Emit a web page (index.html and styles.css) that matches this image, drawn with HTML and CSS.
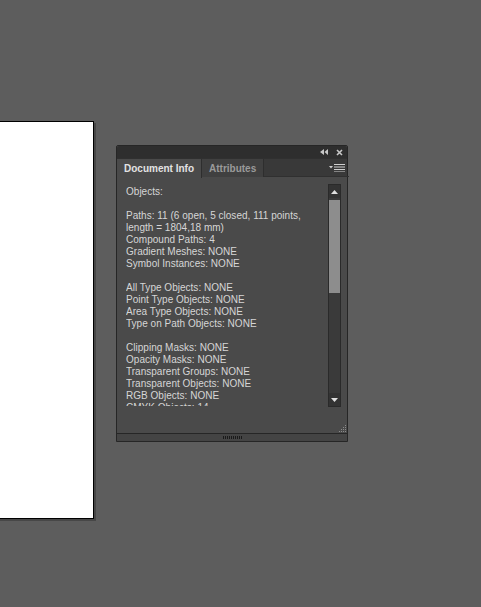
FILE: index.html
```
<!DOCTYPE html>
<html>
<head>
<meta charset="utf-8">
<link rel="stylesheet" href="styles.css">
</head>
<body>
<div class="canvas">
  <div class="artboard"></div>
  <div class="panel">
    <div class="titlebar">
      <svg class="ti" width="8" height="6" viewBox="0 0 8 6"><path d="M4 0 L0 3 L4 6 Z M8 0 L4.5 3 L8 6 Z" fill="#c8c8c8"/></svg>
      <svg class="ti" width="7" height="7" viewBox="0 0 7 7"><path d="M1 1 L6 6 M6 1 L1 6" stroke="#c8c8c8" stroke-width="1.6"/></svg>
    </div>
    <div class="tabs">
      <div class="tab active">Document Info</div>
      <div class="tab">Attributes</div>
      <div class="tabfill"></div>
      <svg class="menu" width="16" height="8" viewBox="0 0 16 8"><path d="M0 2 L4 2 L2 4.5 Z" fill="#d0d0d0"/><path d="M5 0.5 H16 M5 3 H16 M5 5.5 H16 M5 8 H16" stroke="#d0d0d0" stroke-width="1"/></svg>
    </div>
    <div class="body">
      <div class="content">
        <div class="line">Objects:</div>
        <div class="line blank"></div>
        <div class="line">Paths: 11 (6 open, 5 closed, 111 points,</div>
        <div class="line">length = 1804,18 mm)</div>
        <div class="line">Compound Paths: 4</div>
        <div class="line">Gradient Meshes: NONE</div>
        <div class="line">Symbol Instances: NONE</div>
        <div class="line blank"></div>
        <div class="line">All Type Objects: NONE</div>
        <div class="line">Point Type Objects: NONE</div>
        <div class="line">Area Type Objects: NONE</div>
        <div class="line">Type on Path Objects: NONE</div>
        <div class="line blank"></div>
        <div class="line">Clipping Masks: NONE</div>
        <div class="line">Opacity Masks: NONE</div>
        <div class="line">Transparent Groups: NONE</div>
        <div class="line">Transparent Objects: NONE</div>
        <div class="line">RGB Objects: NONE</div>
        <div class="line">CMYK Objects: 14</div>
      </div>
      <div class="scrollbar">
        <div class="sbtn"><svg width="7" height="4" viewBox="0 0 7 4"><path d="M3.5 0 L7 4 L0 4 Z" fill="#e0e0e0"/></svg></div>
        <div class="track">
          <div class="thumb"></div>
        </div>
        <div class="sbtn"><svg width="7" height="4" viewBox="0 0 7 4"><path d="M0 0 L7 0 L3.5 4 Z" fill="#e0e0e0"/></svg></div>
      </div>
      <svg class="grip" width="8" height="8" viewBox="0 0 8 8"><g fill="#8a8a8a"><rect x="7" y="1" width="1" height="1"/><rect x="5" y="3" width="1" height="1"/><rect x="7" y="3" width="1" height="1"/><rect x="3" y="5" width="1" height="1"/><rect x="5" y="5" width="1" height="1"/><rect x="7" y="5" width="1" height="1"/><rect x="1" y="7" width="1" height="1"/><rect x="3" y="7" width="1" height="1"/><rect x="5" y="7" width="1" height="1"/><rect x="7" y="7" width="1" height="1"/></g></svg>
    </div>
    <div class="footer">
      <svg width="19" height="3" viewBox="0 0 19 3"><g fill="#1a1a1a"><rect x="0" y="0" width="1" height="3"/><rect x="2" y="0" width="1" height="3"/><rect x="4" y="0" width="1" height="3"/><rect x="6" y="0" width="1" height="3"/><rect x="8" y="0" width="1" height="3"/><rect x="10" y="0" width="1" height="3"/><rect x="12" y="0" width="1" height="3"/><rect x="14" y="0" width="1" height="3"/><rect x="16" y="0" width="1" height="3"/><rect x="18" y="0" width="1" height="3"/></g></svg>
    </div>
  </div>
</div>
</body>
</html>
```
FILE: styles.css
```
html, body {
  margin: 0;
  padding: 0;
  background: #5d5d5d;
}
.canvas {
  position: relative;
  width: 481px;
  height: 607px;
  overflow: hidden;
  background: #5d5d5d;
  font-family: "Liberation Sans", Arial, sans-serif;
}
.artboard {
  position: absolute;
  left: -20px;
  top: 121px;
  width: 112px;
  height: 396px;
  background: #ffffff;
  border: 1px solid #000000;
  box-shadow: 2px 2px 0 #474747;
}
.panel {
  position: absolute;
  left: 116px;
  top: 145px;
  width: 230px;
  height: 295px;
  border: 1px solid #262626;
  border-radius: 2px 2px 0 0;
  background: #4a4a4a;
  display: flex;
  flex-direction: column;
}
.titlebar {
  height: 12px;
  background: #2e2e2e;
  display: flex;
  align-items: center;
  justify-content: flex-end;
  gap: 8px;
  padding-right: 4px;
  border-radius: 2px 2px 0 0;
}
.tabs {
  height: 19px;
  background: #393939;
  display: flex;
  align-items: stretch;
  border-top: 1px solid #303030;
  box-sizing: border-box;
}
.tab {
  font-size: 10px;
  font-weight: bold;
  color: #9a9a9a;
  padding: 0 7px;
  display: flex;
  align-items: center;
  background: #404040;
  border-right: 1px solid #2e2e2e;
  height: 18px;
}
.tab.active {
  background: #4a4a4a;
  color: #e2e2e2;
  height: 19px;
  padding: 0 7px 0 7px;
  width: 70px;
}
.tab:not(.active) {
  width: 47px;
}
.tabfill {
  flex: 1;
  border-bottom: 1px solid #303030;
}
.menu {
  align-self: center;
  margin-right: 2px;
  margin-left: -20px;
}
.body {
  flex: 1;
  position: relative;
  display: flex;
  padding: 7px 6px 0 9px;
}
.content {
  flex: 1;
  height: 220px;
  padding-top: 2px;
  overflow: hidden;
  font-size: 10px;
  line-height: 12px;
  color: #d6d6d6;
  white-space: nowrap;
  letter-spacing: 0.02px;
}
.line.blank {
  height: 12px;
}
.scrollbar {
  width: 13px;
  height: 223px;
  background: #343434;
  border: 1px solid #2a2a2a;
  box-sizing: border-box;
  display: flex;
  flex-direction: column;
}
.sbtn {
  height: 13px;
  display: flex;
  align-items: center;
  justify-content: center;
  background: #333333;
}
.track {
  flex: 1;
  background: #3a3a3a;
  padding-top: 2px;
}
.thumb {
  height: 93px;
  background: #8d8d8d;
}
.grip {
  position: absolute;
  right: 1px;
  bottom: 1px;
}
.footer {
  height: 7px;
  border-top: 1px solid #262626;
  background: #444444;
  display: flex;
  justify-content: center;
  align-items: center;
}
```
